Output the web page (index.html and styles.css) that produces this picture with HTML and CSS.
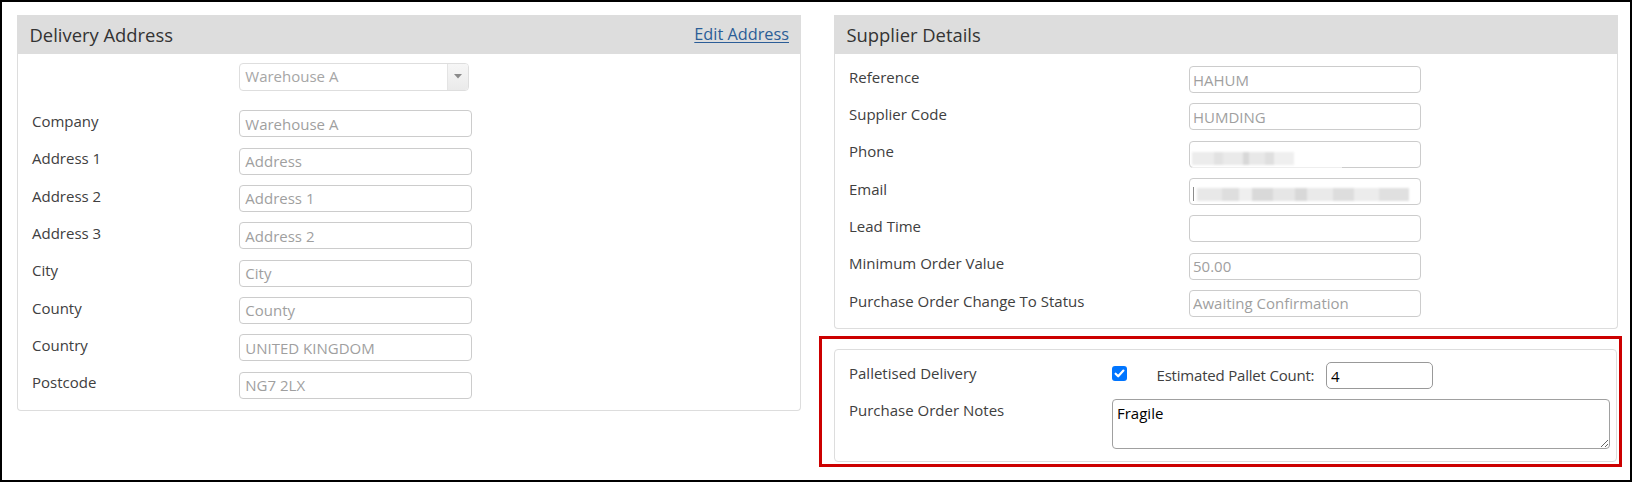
FILE: index.html
```html
<!DOCTYPE html>
<html lang="en">
<head>
<meta charset="utf-8">
<title>Purchase Order</title>
<link rel="stylesheet" href="styles.css">
</head>
<body>
<div class="frame">
  <div class="col">
    <section class="panel">
      <header class="panel-head">
        <h2 class="panel-title">Delivery Address</h2>
        <a class="head-link" href="#">Edit Address</a>
      </header>
      <div class="panel-body delivery">
        <div class="select-row">
          <div class="select">
            <span class="select-text">Warehouse A</span>
            <span class="select-arrow"><svg width="8" height="5" viewBox="0 0 8 5"><path d="M0 0 H8 L4 4.5 Z" fill="#8a8a8a"/></svg></span>
          </div>
        </div>
        <div class="field"><label class="lbl">Company</label><input class="ctl" value="Warehouse A" readonly></div>
        <div class="field"><label class="lbl">Address 1</label><input class="ctl" value="Address" readonly></div>
        <div class="field"><label class="lbl">Address 2</label><input class="ctl" value="Address 1" readonly></div>
        <div class="field"><label class="lbl">Address 3</label><input class="ctl" value="Address 2" readonly></div>
        <div class="field"><label class="lbl">City</label><input class="ctl" value="City" readonly></div>
        <div class="field"><label class="lbl">County</label><input class="ctl" value="County" readonly></div>
        <div class="field"><label class="lbl">Country</label><input class="ctl" value="UNITED KINGDOM" readonly></div>
        <div class="field"><label class="lbl">Postcode</label><input class="ctl" value="NG7 2LX" readonly></div>
      </div>
    </section>
  </div>
  <div class="col">
    <section class="panel">
      <header class="panel-head">
        <h2 class="panel-title">Supplier Details</h2>
      </header>
      <div class="panel-body supplier">
        <div class="field"><label class="lbl">Reference</label><input class="ctl" value="HAHUM" readonly></div>
        <div class="field"><label class="lbl">Supplier Code</label><input class="ctl" value="HUMDING" readonly></div>
        <div class="field"><label class="lbl">Phone</label><div class="ctl box"><span class="blur blur-phone"></span><span class="blur-line"></span></div></div>
        <div class="field"><label class="lbl">Email</label><div class="ctl box"><span class="caret"></span><span class="blur blur-email"></span></div></div>
        <div class="field"><label class="lbl">Lead Time</label><input class="ctl" value="" readonly></div>
        <div class="field"><label class="lbl">Minimum Order Value</label><input class="ctl" value="50.00" readonly></div>
        <div class="field"><label class="lbl">Purchase Order Change To Status</label><input class="ctl" value="Awaiting Confirmation" readonly></div>
      </div>
    </section>
    <div class="highlight">
      <section class="panel plain">
        <div class="opt-row">
          <label class="lbl opt-lbl">Palletised Delivery</label>
          <span class="check"><svg width="15" height="15" viewBox="0 0 15 15"><rect x="0" y="0" width="15" height="15" rx="3" fill="#0075ff"/><path d="M3.6 7.7 L6.2 10.3 L11.4 4.6" fill="none" stroke="#fff" stroke-width="2.2" stroke-linecap="round" stroke-linejoin="round"/></svg></span>
          <span class="count-lbl">Estimated Pallet Count:</span>
          <input class="count" value="4">
        </div>
        <div class="opt-row notes-row">
          <label class="lbl opt-lbl">Purchase Order Notes</label>
          <textarea class="notes">Fragile</textarea>
        </div>
      </section>
    </div>
  </div>
</div>
</body>
</html>
```

FILE: styles.css
```css
* { box-sizing: border-box; }

html, body {
  margin: 0;
  padding: 0;
  background: #ffffff;
}

body {
  font-family: "Open Sans", "Noto Sans", sans-serif;
  color: #444444;
  width: 1633px;
  height: 482px;
  overflow: hidden;
}

.frame {
  width: 1632px;
  height: 482px;
  border: 2px solid #000000;
  display: flex;
  align-items: flex-start;
  gap: 33px;
  padding: 13px 0 0 15px;
}

.col {
  width: 784px;
  display: flex;
  flex-direction: column;
}

.panel-head {
  height: 39px;
  background: #dddddd;
  display: flex;
  justify-content: space-between;
  align-items: center;
  padding: 0 12px 0 12.5px;
}

.panel-title {
  margin: 0;
  font-weight: normal;
  font-size: 18.4px;
  line-height: 39px;
  color: #333333;
}

.head-link {
  font-size: 16.3px;
  line-height: 39px;
  color: #2b5d97;
  text-decoration: underline;
  text-underline-offset: 2px;
}

.panel-body {
  border: 1px solid #dddddd;
  border-top: none;
  border-radius: 0 0 4px 4px;
  padding-left: 14px;
  padding-right: 14px;
}

.delivery {
  padding-top: 9.3px;
  padding-bottom: 11.4px;
  --lblw: 207.3px;
  --ctlw: 232.4px;
}

.supplier {
  padding-top: 12px;
  padding-bottom: 11.3px;
  --lblw: 340px;
  --ctlw: 231.7px;
}

.select-row {
  padding-left: var(--lblw);
  height: 27.4px;
}

.select {
  width: 230px;
  height: 27.4px;
  border: 1px solid #dedede;
  border-radius: 4px;
  display: flex;
  overflow: hidden;
}

.select-text {
  flex: 1;
  font-size: 15px;
  line-height: 25px;
  padding-left: 5px;
  color: #a6a6a6;
}

.select-arrow {
  width: 21.6px;
  border-left: 1px solid #e4e4e4;
  background: linear-gradient(#f6f6f6, #eaeaea);
  display: flex;
  align-items: center;
  justify-content: center;
}

.field {
  display: flex;
  align-items: flex-start;
  height: 27px;
  margin-top: 10.33px;
}

.delivery .select-row + .field {
  margin-top: 19.6px;
}

.supplier .field:first-child {
  margin-top: 0;
}

.lbl {
  width: var(--lblw);
  flex: none;
  font-size: 15px;
  line-height: 20px;
  padding-top: 0.7px;
  color: #404040;
}

.ctl {
  width: var(--ctlw);
  height: 27px;
  border: 1px solid #cccccc;
  border-radius: 4px;
  padding: 0 4px;
  font-family: "Open Sans", "Noto Sans", sans-serif;
  font-size: 15px;
  color: #9f9f9f;
  background: #ffffff;
  outline: none;
  margin: 0;
}

.delivery .ctl {
  padding-left: 5px;
}

.supplier .ctl {
  padding-left: 3px;
}

.box {
  position: relative;
}

.blur {
  position: absolute;
  filter: blur(1.2px);
}

.blur-phone {
  left: 2px;
  top: 10px;
  width: 102px;
  height: 13px;
  background: linear-gradient(90deg, #ececec 0 22%, #e2e2e2 22% 30%, #eaeaea 30% 50%, #d8d8d8 50% 56%, #e8e8e8 56% 72%, #dfdfdf 72% 80%, #efefef 80% 100%);
}

.blur-line {
  position: absolute;
  left: 2px;
  top: 25px;
  width: 150px;
  height: 1px;
  background: #eeeeee;
}

.caret {
  position: absolute;
  left: 3px;
  top: 8px;
  width: 1px;
  height: 14px;
  background: #8c8c8c;
}

.blur-email {
  left: 7px;
  top: 9px;
  width: 212px;
  height: 13px;
  background: linear-gradient(90deg, #e8e8e8 0 12%, #dedede 12% 20%, #efefef 20% 26%, #d9d9d9 26% 36%, #e6e6e6 36% 46%, #d8d8d8 46% 52%, #eaeaea 52% 64%, #dddddd 64% 74%, #ececec 74% 86%, #e0e0e0 86% 100%);
}

.highlight {
  margin-top: 6.4px;
  margin-left: -15px;
  margin-right: -4.3px;
  border: 3px solid #cc0000;
  padding: 10.6px 2px 2px 12px;
}

.panel.plain {
  border: 1px solid #dddddd;
  border-radius: 4px;
  padding: 12px 5.6px 12px 14px;
}

.opt-row {
  display: flex;
  align-items: flex-start;
  height: 27px;
}

.opt-lbl {
  width: 263px;
}

.check {
  flex: none;
  width: 15px;
  height: 15px;
  margin-top: 3.7px;
  display: flex;
}

.count-lbl {
  flex: none;
  font-size: 15px;
  line-height: 27px;
  margin-left: 29.5px;
  color: #404040;
  width: 158px;
  white-space: nowrap;
  letter-spacing: -0.2px;
}

.count {
  flex: none;
  margin-left: 11.6px;
  width: 107px;
  height: 27px;
  border: 1px solid #999999;
  border-radius: 5px;
  padding: 0 4px;
  font-family: "Open Sans", "Noto Sans", sans-serif;
  font-size: 15px;
  color: #000000;
  outline: none;
}

.notes-row {
  margin-top: 10px;
  height: 49.4px;
}

.notes {
  width: 498.4px;
  height: 49.4px;
  border: 1px solid #a0a0a0;
  border-radius: 4px;
  padding: 2.5px 4px;
  font-family: "Open Sans", "Noto Sans", sans-serif;
  font-size: 15px;
  color: #000000;
  outline: none;
  resize: both;
  margin: 0;
}
```
